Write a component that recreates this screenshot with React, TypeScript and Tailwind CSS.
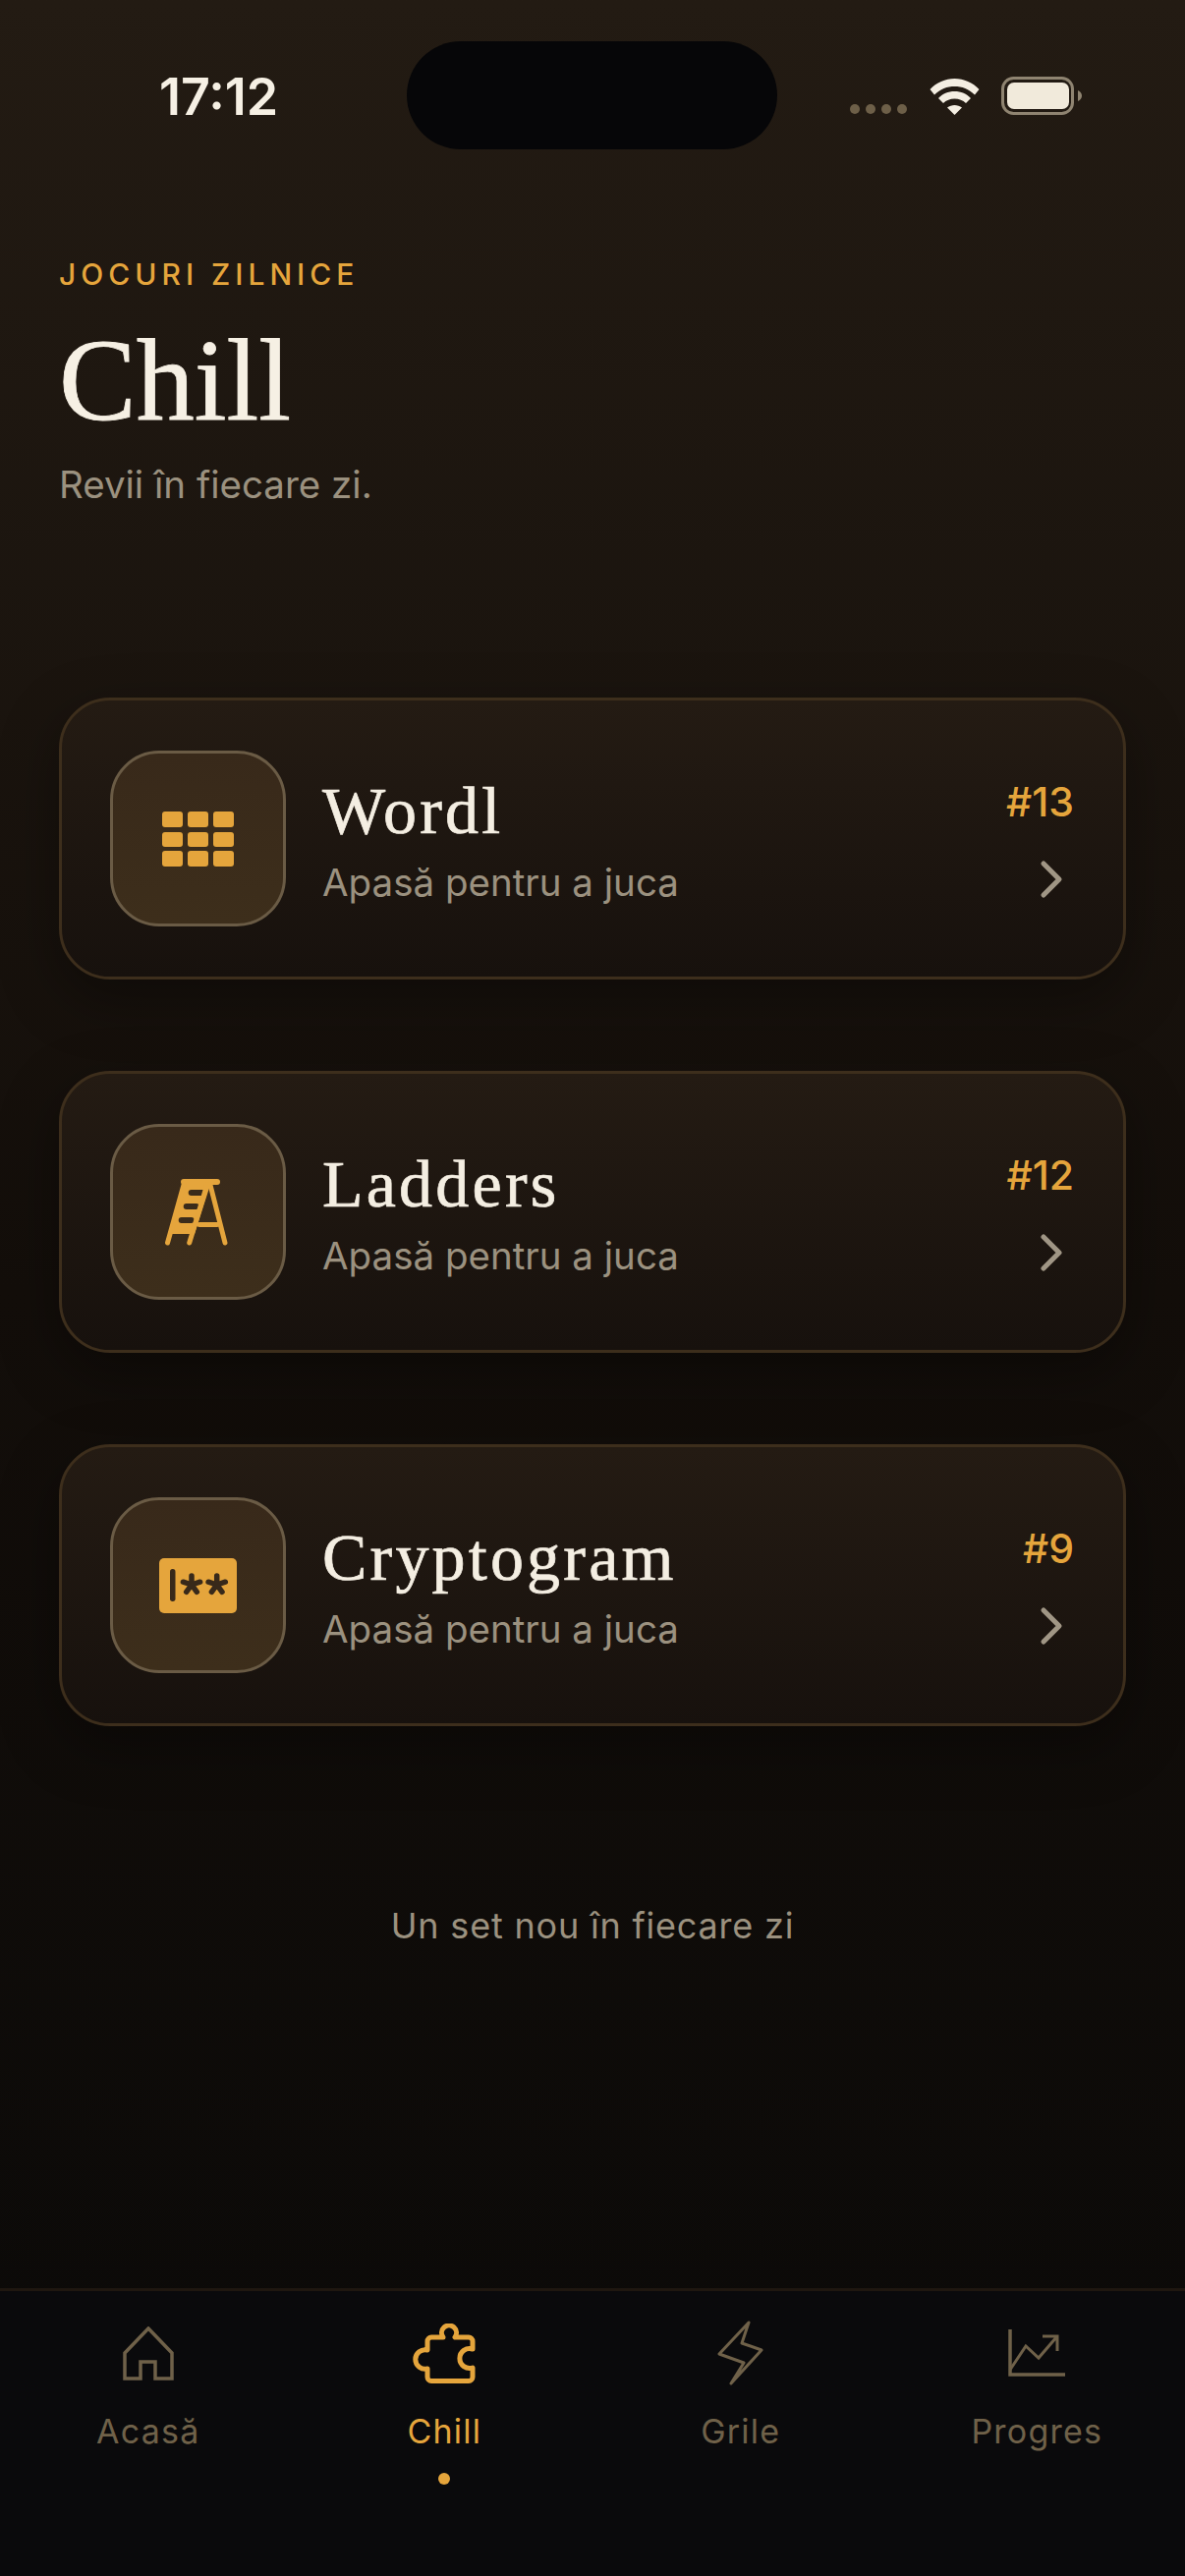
import { ChevronRight } from "lucide-react";
import type { ReactNode } from "react";

const sans = "font-['Inter','Noto_Sans',sans-serif]";
const serif = "font-['Liberation_Serif',serif]";

function WordlIcon() {
  const xs = [0, 26, 52];
  const ys = [0, 21, 40];
  return (
    <svg width="73" height="56" viewBox="0 0 73 56" fill="#e5a53c">
      {ys.map((y, r) =>
        xs.map((x) => <rect key={`${x}-${y}`} x={x} y={y} width="21" height={r === 1 ? 15 : 16} rx="3" />),
      )}
    </svg>
  );
}

function LadderIcon() {
  return (
    <svg className="mr-[4px]" width="65" height="68" viewBox="0 0 65 68" fill="none">
      <path
        fillRule="evenodd"
        fill="#e5a53c"
        d="M20 6H47L31 56H5ZM27.700 11h11a3 3 0 0 1 0 6h-11a3 3 0 0 1 0-6ZM22.700 25h10a3 3 0 0 1 0 6h-10a3 3 0 0 1 0-6ZM17.700 39h10a3 3 0 0 1 0 6h-10a3 3 0 0 1 0-6Z"
      />
      <g stroke="#e5a53c" strokeLinecap="round">
        <path d="M20 3H54" strokeWidth="6" />
        <path d="M20 6L3.500 65M43.700 6L25.700 65M47 6L62 65M36 46.500H54" strokeWidth="5" />
      </g>
    </svg>
  );
}

function Asterisk({ x }: { x: number }) {
  return (
    <g transform={`translate(${x} 27)`}>
      <path d="M0 0V-9M0 0L8.600 -2.800M0 0L5.300 7.300M0 0L-5.300 7.300M0 0L-8.600 -2.800" />
    </g>
  );
}

function CryptoIcon() {
  return (
    <svg width="79" height="56" viewBox="0 0 79 56" fill="none">
      <rect width="79" height="56" rx="5" fill="#e5a53c" />
      <rect x="11" y="11" width="5.500" height="33" rx="2.700" fill="#38291a" />
      <g stroke="#38291a" strokeWidth="5.500" strokeLinecap="round">
        <Asterisk x={33} />
        <Asterisk x={58.7} />
      </g>
    </svg>
  );
}

function HomeIcon() {
  return (
    <svg width="52" height="55" viewBox="0 0 52 55" fill="none" stroke="currentColor" strokeWidth="3.500">
      <path d="M26 2L50 27V53H33V36H18V53H2V27Z" />
    </svg>
  );
}

function PuzzleIcon() {
  return (
    <svg width="64" height="61" viewBox="0 0 64 61" fill="none" stroke="currentColor" strokeWidth="5" strokeLinejoin="round">
      <path d="M19 14H31A7.500 7.500 0 1 1 43 14H57a4 4 0 0 1 4 4V26A10 10 0 1 0 61 45V54.500a4 4 0 0 1-4 4H19a4 4 0 0 1-4-4V46A9.800 9.800 0 1 1 15 27V18a4 4 0 0 1 4-4Z" />
    </svg>
  );
}

function ZapIcon() {
  return (
    <svg width="47" height="66" viewBox="0 0 47 66" fill="none" stroke="currentColor" strokeWidth="3" strokeLinejoin="round">
      <path d="M32 2L2 34L27 43L14 64L45 30L25 23Z" />
    </svg>
  );
}

function ChartIcon() {
  return (
    <svg width="58" height="48" viewBox="0 0 58 48" fill="none" stroke="currentColor" strokeWidth="3.500">
      <path d="M2 0V46H58" />
      <path d="M2 41L18 17L31 29L50 7M35 7H50V22" strokeWidth="3" />
    </svg>
  );
}

function StatusBar() {
  return (
    <div className="flex items-center pt-[42px]">
      <div className={`w-[414px] pl-[162px] pt-[4px] text-[52px] font-semibold leading-[106px] text-[#f6f0e4] ${sans}`}>
        17:12
      </div>
      <div className="h-[110px] w-[377px] rounded-[55px] bg-[#060608]" />
      <div className="flex flex-1 items-end pl-[74px]">
        <div className="mb-[1px] flex gap-[6px]">
          {[0, 1, 2, 3].map((d) => (
            <span key={d} className="h-[10px] w-[10px] rounded-full bg-[#6d5f48]" />
          ))}
        </div>
        <svg className="ml-[23px]" width="51" height="37" viewBox="0 0 51 37" fill="#f4eee2">
          <path d="M.5 11C7 4 16 0 25.500 0S44 4 50.500 11L46 16.500C40 10.500 33 8 25.500 8S11 10.500 5 16.500Z" />
          <path d="M9 20C13 15.500 19 13 25.500 13S38 15.500 42 20L37 25C34 22 30 20.500 25.500 20.500S17 22 14 25Z" />
          <path d="M18 29.500C20 28 23 27 25.500 27S31 28 33 29.500L25.500 37Z" />
        </svg>
        <svg className="ml-[22px]" width="82" height="39" viewBox="0 0 82 39" fill="none">
          <rect x="1.500" y="1.500" width="71" height="36" rx="11" stroke="#8f8471" strokeWidth="3" />
          <rect x="6" y="6" width="63" height="27" rx="7" fill="#f1eadb" />
          <path d="M78 14c2.500 1 4 3 4 5.500S80.500 24 78 25Z" fill="#8f8471" />
        </svg>
      </div>
    </div>
  );
}

function GameCard({ name, no, icon }: { name: string; no: string; icon: ReactNode }) {
  return (
    <div className="flex h-[287px] items-center rounded-[52px] border-[3px] border-[#3d2e1c] bg-gradient-to-b from-[#241b13] to-[#17110d] pl-[49px] pr-[50px] shadow-[0_20px_60px_rgba(0,0,0,0.35)]">
      <div className="flex h-[179px] w-[179px] shrink-0 items-center justify-center rounded-[50px] border-[3px] border-[#6a5b45] bg-gradient-to-b from-[#38291a] to-[#3d2e1b]">
        {icon}
      </div>
      <div className="ml-[37px] flex-1 pt-[3px]">
        <div className={`text-[68px] leading-[76px] tracking-[3.2px] text-[#f4eee2] [-webkit-text-stroke:0.7px_#f4eee2] ${serif}`}>{name}</div>
        <div className={`mt-[10px] text-[38.5px] leading-[50px] text-[#9b917f] ${sans}`}>Apasă pentru a juca</div>
      </div>
      <div className="flex flex-col items-end self-center pt-[10px]">
        <div className={`text-[41px] font-medium leading-[50px] text-[#e5a53c] ${sans}`}>{no}</div>
        <ChevronRight className="-mr-[9px] mt-[22px] text-[#a09685]" size={64} strokeWidth={1.9} />
      </div>
    </div>
  );
}

function NavItem({ label, icon, active }: { label: string; icon: ReactNode; active?: boolean }) {
  return (
    <div className={`flex flex-col items-center ${active ? "text-[#e5a53c]" : "text-[#6f6149]"}`}>
      <div className="flex h-[70px] items-center">{icon}</div>
      <div className={`mt-[23px] text-[34px] leading-[44px] tracking-[1.2px] ${sans}`}>{label}</div>
      {active && <span className="mt-[20px] h-[12px] w-[12px] rounded-full bg-[#e5a53c]" />}
    </div>
  );
}

export default function App() {
  return (
    <div className="flex h-[2622px] w-[1206px] flex-col overflow-hidden bg-gradient-to-b from-[#231b13] via-[#130e0a] to-[#0a0908]">
      <StatusBar />
      <div className="flex-1 px-[60px]">
        <div className={`mt-[109px] text-[30px] font-medium leading-[36px] tracking-[5px] text-[#e5a53c] ${sans}`}>JOCURI ZILNICE</div>
        <div className={`mt-[26px] text-[118px] leading-[130px] text-[#f6f0e4] [-webkit-text-stroke:0.8px_#f6f0e4] ${serif}`}>Chill</div>
        <div className={`mt-[15px] text-[38.5px] leading-[50px] text-[#9b917f] ${sans}`}>Revii în fiecare zi.</div>
        <div className="mt-[192px] flex flex-col gap-[93px]">
          <GameCard name="Wordl" no="#13" icon={<WordlIcon />} />
          <GameCard name="Ladders" no="#12" icon={<LadderIcon />} />
          <GameCard name="Cryptogram" no="#9" icon={<CryptoIcon />} />
        </div>
        <div className={`mt-[179px] text-center text-[36px] leading-[48px] tracking-[0.8px] text-[#9b917f] ${sans}`}>
          Un set nou în fiecare zi
        </div>
      </div>
      <div className="grid h-[293px] grid-cols-4 border-t-[3px] border-[#1f1710] bg-[#0a0a0c] pt-[28px]">
        <NavItem label="Acasă" icon={<HomeIcon />} />
        <NavItem label="Chill" icon={<PuzzleIcon />} active />
        <NavItem label="Grile" icon={<ZapIcon />} />
        <NavItem label="Progres" icon={<ChartIcon />} />
      </div>
    </div>
  );
}
